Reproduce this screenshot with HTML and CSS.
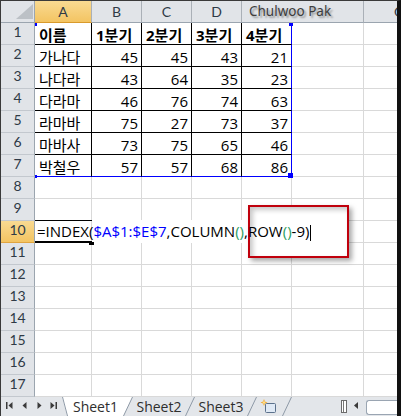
FILE: index.html
```html
<!DOCTYPE html>
<html lang="ko">
<head>
<meta charset="utf-8">
<title>Sheet1</title>
<link rel="stylesheet" href="styles.css">
</head>
<body>
<div class="window">
  <div class="sheet">
    <div class="grid">
      <div class="corner"></div><div class="ch on">A</div><div class="ch">B</div><div class="ch">C</div><div class="ch">D</div><div class="ch"></div><div class="ch"></div><div class="ch last g">G</div>

      <div class="rh">1</div><div class="t b">이름</div><div class="t b">1분기</div><div class="t b">2분기</div><div class="t b">3분기</div><div class="t b er">4분기</div><div></div><div class="last"></div>
      <div class="rh">2</div><div class="t">가나다</div><div class="t num">45</div><div class="t num">45</div><div class="t num">43</div><div class="t num er">21</div><div></div><div class="last"></div>
      <div class="rh">3</div><div class="t">나다라</div><div class="t num">43</div><div class="t num">64</div><div class="t num">35</div><div class="t num er">23</div><div></div><div class="last"></div>
      <div class="rh">4</div><div class="t">다라마</div><div class="t num">46</div><div class="t num">76</div><div class="t num">74</div><div class="t num er">63</div><div></div><div class="last"></div>
      <div class="rh">5</div><div class="t">라마바</div><div class="t num">75</div><div class="t num">27</div><div class="t num">73</div><div class="t num er">37</div><div></div><div class="last"></div>
      <div class="rh">6</div><div class="t">마바사</div><div class="t num">73</div><div class="t num">75</div><div class="t num">65</div><div class="t num er">46</div><div></div><div class="last"></div>
      <div class="rh">7</div><div class="t eb">박철우</div><div class="t num eb">57</div><div class="t num eb">57</div><div class="t num eb">68</div><div class="t num er eb">86</div><div></div><div class="last"></div>

      <div class="rh">8</div><div></div><div></div><div></div><div></div><div></div><div></div><div class="last"></div>
      <div class="rh">9</div><div></div><div></div><div></div><div></div><div></div><div></div><div class="last"></div>
      <div class="rh on">10</div>
      <div class="a10">
        <div class="editor"><span class="formula">=INDEX(<span class="ref">$A$1:$E$7</span>,COLUMN<span class="par">()</span>,ROW<span class="par">()</span>-9)<span class="caret"></span></span></div>
        <span class="fill-handle"></span>
      </div><div></div><div></div><div></div><div></div><div></div><div class="last"></div>
      <div class="rh">11</div><div></div><div></div><div></div><div></div><div></div><div></div><div class="last"></div>
      <div class="rh">12</div><div></div><div></div><div></div><div></div><div></div><div></div><div class="last"></div>
      <div class="rh">13</div><div></div><div></div><div></div><div></div><div></div><div></div><div class="last"></div>
      <div class="rh">14</div><div></div><div></div><div></div><div></div><div></div><div></div><div class="last"></div>
      <div class="rh">15</div><div></div><div></div><div></div><div></div><div></div><div></div><div class="last"></div>
      <div class="rh">16</div><div></div><div></div><div></div><div></div><div></div><div></div><div class="last"></div>
      <div class="rh">17</div><div></div><div></div><div></div><div></div><div></div><div></div><div class="last"></div>
    </div>

    <!-- author mark laid over the column headers -->
    <div class="mark">Chulwoo Pak</div>

    <!-- corner handles of the referenced range A1:E7 -->
    <span class="rng rng-tl"></span>
    <span class="rng rng-tr"></span>
    <span class="rng rng-bl"></span>
    <span class="rng rng-br"></span>

    <!-- highlight frame around ROW()-9 -->
    <div class="callout"></div>
  </div>

  <div class="tabbar">
    <div class="nav">
      <span class="nb"><svg width="15" height="19" viewBox="0 0 15 19"><rect x="4" y="5" width="1.5" height="7" fill="#3a3a3a"/><polygon points="10.5,5 10.5,12 6.5,8.5" fill="#3a3a3a"/></svg></span>
      <span class="nb"><svg width="15" height="19" viewBox="0 0 15 19"><polygon points="9.5,5 9.5,12 5.5,8.5" fill="#3a3a3a"/></svg></span>
      <span class="nb"><svg width="15" height="19" viewBox="0 0 15 19"><polygon points="5.5,5 5.5,12 9.5,8.5" fill="#3a3a3a"/></svg></span>
      <span class="nb"><svg width="15" height="19" viewBox="0 0 15 19"><polygon points="3.5,5 3.5,12 7.5,8.5" fill="#3a3a3a"/><rect x="8.5" y="5" width="1.5" height="7" fill="#3a3a3a"/></svg></span>
    </div>
    <span class="edge"><svg width="6" height="19" viewBox="0 0 6 19"><polygon points="0,0 6,0 6,19 5,19" fill="#fff"/><line x1="0.5" y1="0" x2="5.5" y2="19" stroke="#8e99a6" stroke-width="1"/></svg></span>
    <span class="tab on">Sheet1</span>
    <span class="slash"><svg width="10" height="19" viewBox="0 0 10 19"><polygon points="0,0 9.5,0 0.5,19 0,19" fill="#fff"/><line x1="0.5" y1="19" x2="9.5" y2="0" stroke="#8e99a6" stroke-width="1"/></svg></span>
    <span class="tab">Sheet2</span>
    <span class="slash"><svg width="10" height="19" viewBox="0 0 10 19"><line x1="0.5" y1="19" x2="9.5" y2="0" stroke="#8e99a6" stroke-width="1"/></svg></span>
    <span class="tab">Sheet3</span>
    <span class="slash"><svg width="10" height="19" viewBox="0 0 10 19"><line x1="0.5" y1="19" x2="9.5" y2="0" stroke="#8e99a6" stroke-width="1"/></svg></span>
    <span class="newtab"><svg width="25" height="19" viewBox="0 0 25 19">
      <rect x="8.5" y="6.5" width="10" height="9" rx="1" fill="#dfe9f5" stroke="#5b718c"/>
      <polygon points="7,2 7.9,4.6 10.5,5.5 7.9,6.4 7,9 6.1,6.4 3.5,5.5 6.1,4.6" fill="#f2a42c"/>
      <circle cx="7" cy="5.5" r="1.3" fill="#fbe08a"/>
    </svg></span>
    <span class="slash"><svg width="10" height="19" viewBox="0 0 10 19"><line x1="0.5" y1="19" x2="9.5" y2="0" stroke="#8e99a6" stroke-width="1"/></svg></span>
    <span class="spacer"></span>
    <span class="split"></span>
    <span class="arrow"><svg width="14" height="19" viewBox="0 0 14 19"><polygon points="9,5 9,12 5,8.5" fill="#3a3a3a"/></svg></span>
    <span class="thumb"></span>
  </div>
</div>
</body>
</html>
```

FILE: styles.css
```css
body {
  margin: 0;
}

.window {
  width: 401px;
  height: 416px;
  box-sizing: border-box;
  border-top: 1px solid #3a3a3a;
  border-left: 1px solid #3a3a3a;
  border-right: 4px solid #111;
  background: #fff;
  overflow: hidden;
  font-family: "Open Sans", "Noto Sans CJK KR", sans-serif;
  font-size: 15px;
  color: #000;
}

.sheet {
  position: relative;
}

/* worksheet grid: row header + columns A..G */
.grid {
  display: grid;
  grid-template-columns: 34px 57px 50px 50px 50px 50px 72px 33px;
  grid-template-rows: repeat(18, 22px);
}

.grid > div {
  box-sizing: border-box;
  border-right: 1px solid #d9d9d9;
  border-bottom: 1px solid #d9d9d9;
  white-space: nowrap;
}

.grid > .last {
  border-right: 0;
}

/* headers */
.corner {
  position: relative;
  background: #e1e4e8;
  border-right-color: #9ba5af !important;
  border-bottom-color: #9ba5af !important;
}

.corner::after {
  content: "";
  position: absolute;
  right: 1px;
  bottom: 3px;
  width: 17px;
  height: 15px;
  background: #bcc1c6;
  clip-path: polygon(100% 0, 100% 100%, 0 100%);
}

.ch,
.rh {
  background: #e1e4e8;
  font-family: Lato, sans-serif;
  font-size: 14px;
  text-align: center;
  color: #2f3a46;
}

.ch {
  line-height: 21px;
  border-right-color: #aab0b7 !important;
  border-bottom-color: #9ba5af !important;
}

.ch.g {
  text-align: left;
  padding-left: 30px;
}

.rh {
  line-height: 17px;
  border-right-color: #9ba5af !important;
  border-bottom-color: #c3c8ce !important;
}

.ch.on,
.rh.on {
  background: linear-gradient(#f9da92, #f3c462);
}

.ch.on {
  border-bottom-color: #d99a2b !important;
}

.rh.on {
  border-bottom-color: #e0a540 !important;
}

/* data table A1:E7 */
.t {
  padding: 0 4px;
  line-height: 24px;
  border-right-color: #000 !important;
  border-bottom-color: #000 !important;
}

.t.num {
  text-align: right;
  padding-right: 3px;
}

.t.b {
  font-weight: 700;
}

.t.er {
  border-right-color: #0000ff !important;
}

.t.eb {
  border-bottom-color: #0000ff !important;
}

/* cell A10 in edit mode */
.a10 {
  position: relative;
}

.editor {
  position: absolute;
  left: 0;
  top: -1px;
  width: 283px;
  height: 23px;
}

.editor::before {
  content: "";
  position: absolute;
  left: 57px;
  right: 0;
  top: 0;
  bottom: 0;
  background: #fff;
}

.editor::after {
  content: "";
  position: absolute;
  left: 0;
  top: 0;
  width: 57px;
  height: 23px;
  box-sizing: border-box;
  border-top: 1px solid #000;
  border-bottom: 2px solid #000;
}

.formula {
  position: relative;
  z-index: 5;
  display: block;
  padding-left: 2px;
  line-height: 23px;
  white-space: nowrap;
  color: #000;
}

.formula .ref {
  color: #0000ff;
}

.formula .par {
  color: #2b9d63;
}

.caret {
  display: inline-block;
  width: 1px;
  height: 16px;
  margin-left: 1px;
  vertical-align: -4px;
  background: #000;
}

.fill-handle {
  position: absolute;
  left: 54px;
  top: 21px;
  width: 5px;
  height: 3px;
  background: #000;
}

/* author mark over the headers */
.mark {
  position: absolute;
  left: 242px;
  top: 0;
  width: 120px;
  height: 21px;
  box-sizing: border-box;
  padding-left: 6px;
  background: #e1e4e8;
  font-family: "Noto Sans", sans-serif;
  font-size: 13.5px;
  line-height: 21px;
  color: #3d3d3d;
  text-shadow: 2px 2px 2px rgba(0, 0, 0, 0.35);
}

/* range reference handles */
.rng {
  position: absolute;
  background: #0000ff;
}

.rng-tl { left: 34px; top: 22px; width: 2px; height: 3px; }
.rng-tr { left: 288px; top: 22px; width: 4px; height: 3px; }
.rng-bl { left: 34px; top: 174px; width: 2px; height: 3px; }
.rng-br { left: 287px; top: 172px; width: 5px; height: 5px; }

/* red highlight frame */
.callout {
  position: absolute;
  left: 247px;
  top: 204px;
  width: 101px;
  height: 53px;
  box-sizing: border-box;
  border: 2px solid #c0000c;
  background: #fff;
  box-shadow: 3px 3px 5px rgba(0, 0, 0, 0.35), inset 3px 3px 5px rgba(0, 0, 0, 0.22);
  z-index: 4;
}

/* sheet tab bar */
.tabbar {
  display: flex;
  height: 19px;
  background: #e3e6ea;
  font-family: "Open Sans", sans-serif;
  font-size: 14px;
  line-height: 19px;
  color: #2e2e2e;
}

.tabbar svg {
  display: block;
}

.nav {
  display: flex;
  width: 61px;
  padding-left: 1px;
  box-sizing: border-box;
}

.nb {
  width: 15px;
  height: 19px;
}

.edge {
  width: 6px;
}

.slash {
  width: 10px;
}

.tab {
  width: 52px;
  text-align: center;
}

.tab.on {
  width: 55px;
  background: #fff;
}

.newtab {
  width: 25px;
}

.spacer {
  flex: 1;
}

.split {
  width: 6px;
  height: 13px;
  margin-top: 3px;
  box-sizing: border-box;
  border: 1px solid #6b6b6b;
  background: linear-gradient(90deg, #fff 1px, #777 1px, #777 2px, #fff 2px);
}

.arrow {
  width: 14px;
  margin-left: 2px;
}

.thumb {
  width: 31px;
  height: 15px;
  margin-top: 3px;
  margin-left: 3px;
  box-sizing: border-box;
  border: 1px solid #9aa5b2;
  border-right: 0;
  border-radius: 3px 0 0 3px;
  background: #fff;
}
```
